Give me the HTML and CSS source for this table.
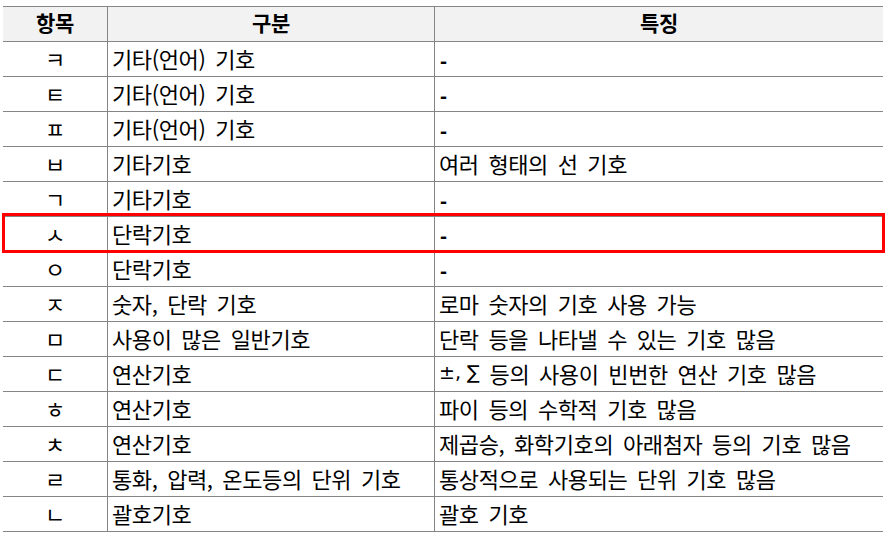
FILE: index.html
```html
<!DOCTYPE html>
<html lang="ko">
<head>
<meta charset="utf-8">
<link rel="stylesheet" href="styles.css">
</head>
<body>
<div class="wrap">
  <div class="grid">
    <div class="c h c1">항목</div><div class="c h c2">구분</div><div class="c h c3">특징</div>
    <div class="c c1">ㅋ</div><div class="c c2">기타(언어) 기호</div><div class="c c3"><span class="dash">-</span></div>
    <div class="c c1">ㅌ</div><div class="c c2">기타(언어) 기호</div><div class="c c3"><span class="dash">-</span></div>
    <div class="c c1">ㅍ</div><div class="c c2">기타(언어) 기호</div><div class="c c3"><span class="dash">-</span></div>
    <div class="c c1">ㅂ</div><div class="c c2">기타기호</div><div class="c c3">여러 형태의 선 기호</div>
    <div class="c c1">ㄱ</div><div class="c c2">기타기호</div><div class="c c3"><span class="dash">-</span></div>
    <div class="c c1">ㅅ</div><div class="c c2">단락기호</div><div class="c c3"><span class="dash">-</span></div>
    <div class="c c1">ㅇ</div><div class="c c2">단락기호</div><div class="c c3"><span class="dash">-</span></div>
    <div class="c c1">ㅈ</div><div class="c c2">숫자, 단락 기호</div><div class="c c3">로마 숫자의 기호 사용 가능</div>
    <div class="c c1">ㅁ</div><div class="c c2">사용이 많은 일반기호</div><div class="c c3">단락 등을 나타낼 수 있는 기호 많음</div>
    <div class="c c1">ㄷ</div><div class="c c2">연산기호</div><div class="c c3"><span class="sym">±, ∑</span>&nbsp;등의 사용이 빈번한 연산 기호 많음</div>
    <div class="c c1">ㅎ</div><div class="c c2">연산기호</div><div class="c c3">파이 등의 수학적 기호 많음</div>
    <div class="c c1">ㅊ</div><div class="c c2">연산기호</div><div class="c c3">제곱승, 화학기호의 아래첨자 등의 기호 많음</div>
    <div class="c c1">ㄹ</div><div class="c c2">통화, 압력, 온도등의 단위 기호</div><div class="c c3">통상적으로 사용되는 단위 기호 많음</div>
    <div class="c c1">ㄴ</div><div class="c c2">괄호기호</div><div class="c c3">괄호 기호</div>
  </div>
  <div class="highlight"></div>
</div>
</body>
</html>
```
FILE: styles.css
```css
html, body {
  margin: 0;
  padding: 0;
  background: #ffffff;
}
.wrap {
  position: relative;
  padding: 6px 0 0 3px;
}
.grid {
  display: grid;
  grid-template-columns: 104px 327px 449px;
  width: 880px;
  border-top: 1px solid #858585;
  font-family: "Noto Sans CJK KR", "Noto Sans", sans-serif;
  font-size: 22px;
  letter-spacing: -0.4px;
  word-spacing: 4px;
  color: #000;
}
.c {
  box-sizing: border-box;
  height: 35px;
  border-bottom: 1px solid #858585;
  display: flex;
  align-items: center;
  line-height: 1;
  white-space: nowrap;
  padding-bottom: 3px;
}
.c1 {
  justify-content: center;
}
.c2, .c3 {
  border-left: 1px solid #858585;
  padding-left: 4px;
}
.h {
  background: #f2f2f2;
  font-weight: bold;
  font-size: 21px;
  justify-content: center;
  padding-left: 0;
}
.dash {
  font-family: "Liberation Sans", sans-serif;
  font-weight: bold;
  font-size: 21px;
  letter-spacing: 0;
  padding-top: 5px;
  padding-left: 1px;
}
.sym {
  font-family: "DejaVu Sans", sans-serif;
  font-size: 19px;
  letter-spacing: 0;
  word-spacing: 0;
}
.highlight {
  position: absolute;
  left: 2px;
  top: 213px;
  width: 883px;
  height: 40px;
  box-sizing: border-box;
  border: 3px solid #ff0000;
}
```
